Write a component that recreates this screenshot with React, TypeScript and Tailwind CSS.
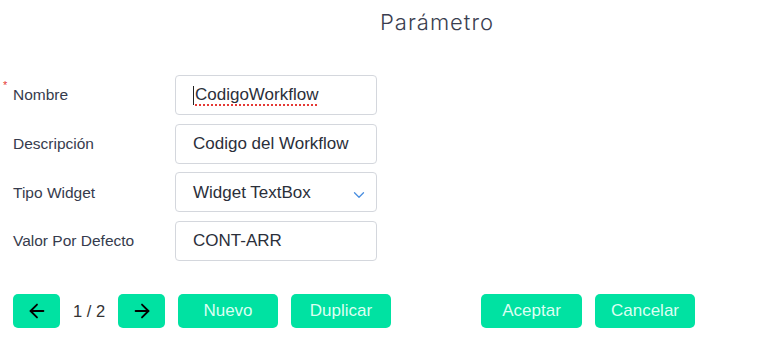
import React from "react";
import { ArrowLeft, ArrowRight, ChevronDown } from "lucide-react";

const labelCls = "w-[175px] shrink-0 pl-[13px] text-[15.5px] text-[#363b4d] relative";
const boxCls =
  "w-[202px] h-10 border border-[#d4d7dd] rounded-[4px] flex items-center pl-[17px] pr-2 text-[17px] text-[#2b2f3a]";
const btnCls =
  "h-[34px] shrink-0 rounded-[5px] bg-[#00e2a2] text-[#dcfff2] text-[17px] flex items-center justify-center";

export default function App() {
  return (
    <div
      className="w-[761px] h-[347px] bg-white relative overflow-hidden"
      style={{ fontFamily: '"Liberation Sans", Arial, sans-serif' }}
    >
      <div className="pt-[6px] pl-[380px] h-[75px]">
        <div
          className="text-[22px] font-light text-[#3a3e50] tracking-[1px]"
          style={{ fontFamily: 'Inter, "Open Sans", sans-serif' }}
        >
          Parámetro
        </div>
      </div>
      <div className="flex flex-col gap-[8.7px]">
        <div className="flex items-center">
          <div className={labelCls}>
            <span className="absolute left-[3px] -top-[6px] text-[11px] text-[#e53935]">*</span>
            Nombre
          </div>
          <div className={boxCls}>
            <span className="w-px h-[19px] bg-[#222] mr-[1px]" />
            <span className="underline decoration-dotted decoration-[#e53935] decoration-2 underline-offset-[4px]">
              CodigoWorkflow
            </span>
          </div>
        </div>
        <div className="flex items-center">
          <div className={labelCls}>Descripción</div>
          <div className={boxCls}>Codigo del Workflow</div>
        </div>
        <div className="flex items-center">
          <div className={labelCls}>Tipo Widget</div>
          <div className={boxCls + " justify-between"}>
            <span>Widget TextBox</span>
            <ChevronDown size={18} strokeWidth={1.75} className="text-[#4a8fe0] mt-[6px]" />
          </div>
        </div>
        <div className="flex items-center">
          <div className={labelCls}>Valor Por Defecto</div>
          <div className={boxCls}>CONT-ARR</div>
        </div>
      </div>
      <div className="flex items-center gap-[13px] pl-[13px] mt-[33px]">
        <button className={btnCls + " w-[47px]"}>
          <ArrowLeft size={22} strokeWidth={2} className="text-black" />
        </button>
        <span className="w-[32px] shrink-0 whitespace-nowrap text-center text-[16.5px] text-[#333]">1 / 2</span>
        <button className={btnCls + " w-[47px]"}>
          <ArrowRight size={22} strokeWidth={2} className="text-black" />
        </button>
        <button className={btnCls + " w-[100px]"}>Nuevo</button>
        <button className={btnCls + " w-[100px]"}>Duplicar</button>
        <button className={btnCls + " w-[101px] ml-[77px]"}>Aceptar</button>
        <button className={btnCls + " w-[100px]"}>Cancelar</button>
      </div>
    </div>
  );
}
